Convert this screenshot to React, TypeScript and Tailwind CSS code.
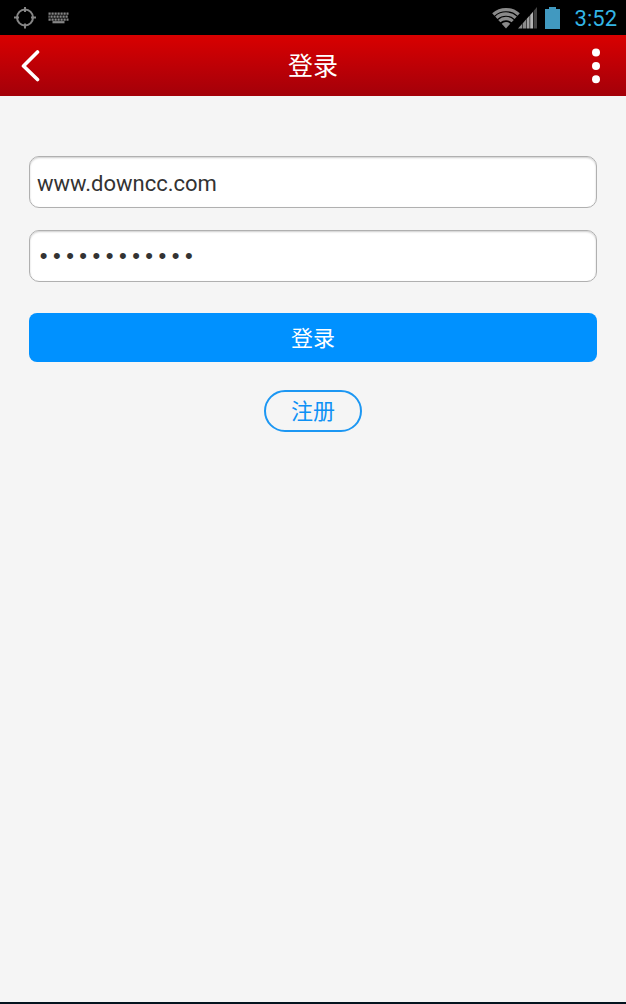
import { useState } from 'react'

function StatusBar() {
  return (
    <div className="flex h-[35px] items-center justify-between bg-black pl-[14px] pr-[9px]">
      <div className="flex items-center gap-3">
        <svg width="22" height="22" viewBox="0 0 22 22" fill="none" stroke="#858585" strokeWidth="2">
          <circle cx="11" cy="10.500" r="8" />
          <path d="M11 0v5M11 16.500v5M0 10.500h5M17 10.500h5" />
        </svg>
        <svg width="21" height="12" viewBox="0 0 21 12" stroke="#858585" strokeWidth="2.2">
          <path d="M0.500 1.600h20" strokeDasharray="2.2 0.8" />
          <path d="M0.500 4.600h20" strokeDasharray="2.2 0.8" strokeDashoffset="1" />
          <path d="M0.500 7.600h20" strokeDasharray="2.2 0.8" />
          <path d="M4.500 10.200h12" />
        </svg>
      </div>

      <div className="flex items-center">
        <svg width="46" height="22" viewBox="0 0 46 22">
          <g fill="none" stroke="#8a8a8a" strokeWidth="3.3">
            <path d="M1.300 7.400A19 19 0 0 1 26.700 7.400" />
            <path d="M4.300 10.700A14.500 14.500 0 0 1 23.700 10.700" />
            <path d="M7.300 14.100A10 10 0 0 1 20.700 14.100" />
          </g>
          <path d="M9.700 16.700A6.500 6.500 0 0 1 18.300 16.700L14 21.500z" fill="#8a8a8a" />
          <path d="M26 21.500l4-4.500v4.500zM30.600 16.500l3.400-4v9h-3.400z" fill="#8a8a8a" />
          <path d="M34.600 12l3-3.500v13h-3z" fill="#a0a0a0" />
          <path d="M38.200 8l2.800-3.200v16.700h-2.800z" fill="#b4b4b4" />
          <path d="M41.600 4l3.400-4v21.500h-3.400z" fill="#444" />
        </svg>
        <svg className="ml-[7px]" width="15" height="22" viewBox="0 0 15 22" fill="#4199c0">
          <path d="M4 0h7v2h4v20H0V2h4z" />
        </svg>
        <span className="ml-[15px] pt-[2px] text-[22px] leading-6 text-[#33b5e5]">3:52</span>
      </div>
    </div>
  )
}

function Header() {
  return (
    <header className="flex h-[61px] items-center justify-between bg-linear-to-b from-[#d90000] to-[#a30009] px-5 text-white">
      <button type="button" aria-label="返回" className="flex w-6">
        <svg width="22" height="32" viewBox="0 0 22 32" fill="none" stroke="currentColor" strokeWidth="3.6" strokeLinecap="round" strokeLinejoin="round">
          <path d="M17.500 2L3.500 16L17.500 29.500" />
        </svg>
      </button>
      <h1 className="pt-[2px] text-[25px] leading-8">登录</h1>
      <button type="button" aria-label="更多" className="flex w-6 justify-end pr-[5px]">
        <svg width="10" height="36" viewBox="0 0 10 36" fill="currentColor">
          <circle cx="5" cy="4.600" r="4" />
          <circle cx="5" cy="17.900" r="4" />
          <circle cx="5" cy="31.200" r="4" />
        </svg>
      </button>
    </header>
  )
}

const fieldClass =
  'h-[52px] w-full rounded-[10px] border border-[#b0b0b0] bg-white px-[7px] pt-[2px] text-[22px] text-[#333] shadow-[inset_0_1px_2px_rgba(0,0,0,0.2)] outline-none'

export default function App() {
  const [username, setUsername] = useState('www.downcc.com')
  const [password, setPassword] = useState('downcc123456')

  return (
    <div className="flex min-h-screen flex-col border-b-2 border-[#04141f] bg-[#f5f5f5] font-['Roboto','Noto_Sans_CJK_SC',sans-serif]">
      <StatusBar />
      <Header />
      <form
        className="flex flex-col px-[29px] pt-[60px]"
        onSubmit={(e) => e.preventDefault()}
      >
        <input
          type="text"
          aria-label="用户名"
          className={fieldClass}
          value={username}
          onChange={(e) => setUsername(e.target.value)}
        />
        <input
          type="password"
          aria-label="密码"
          className={`${fieldClass} mt-[22px] font-['Liberation_Mono',monospace]`}
          value={password}
          onChange={(e) => setPassword(e.target.value)}
        />
        <button
          type="submit"
          className="mt-[31px] h-[49px] w-full rounded-lg bg-[#0091ff] pt-[2px] text-[22px] text-white"
        >
          登录
        </button>
        <button
          type="button"
          className="mt-7 h-[42px] self-center rounded-full border-2 border-[#1c97f3] px-[25px] pt-[2px] text-[22px] leading-8 text-[#0d91f5]"
        >
          注册
        </button>
      </form>
    </div>
  )
}
